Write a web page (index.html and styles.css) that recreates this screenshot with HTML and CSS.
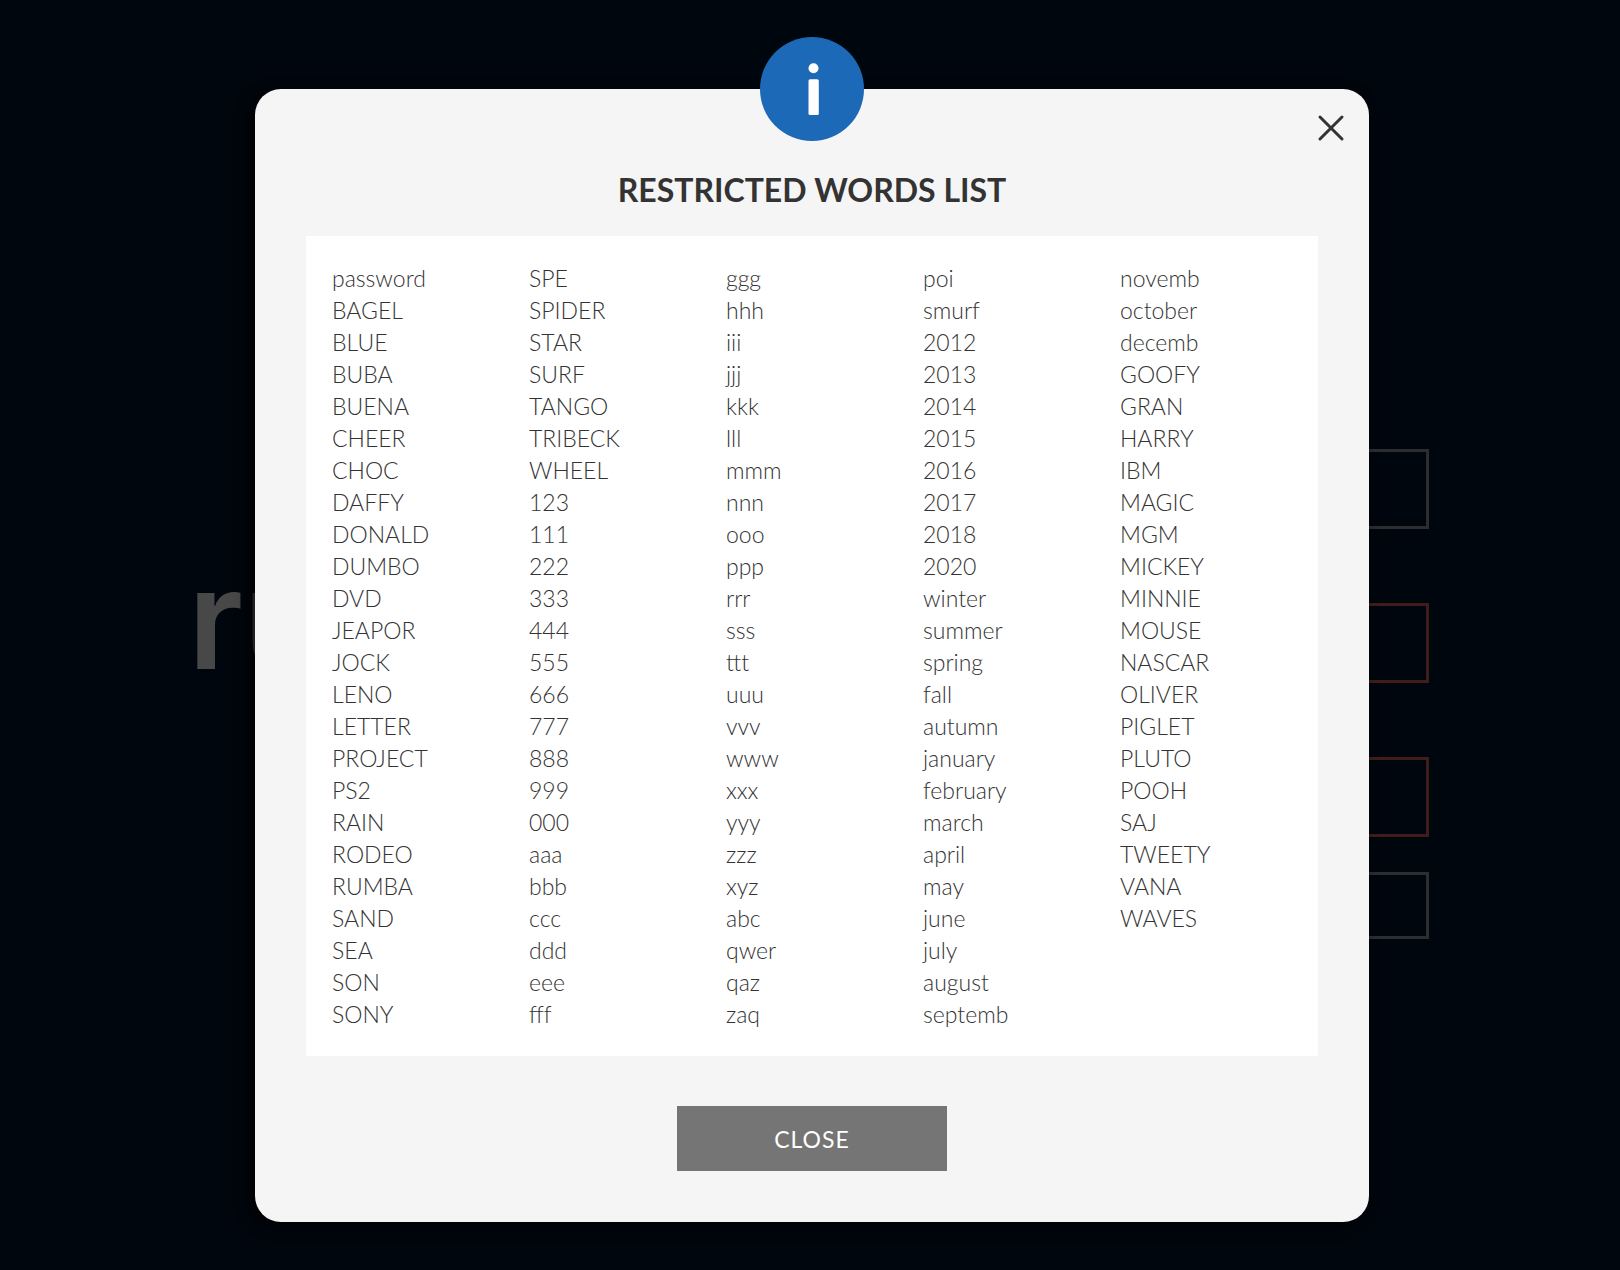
FILE: index.html
```
<!DOCTYPE html>
<html lang="en">
<head>
<meta charset="utf-8">
<title>Restricted words list</title>
<link rel="stylesheet" href="styles.css">
</head>
<body>

<!-- page behind the dialog -->
<div class="page">
    <div class="logo">ru</div>
    <form class="fields">
        <input type="text" aria-label="User name">
        <input type="password" class="error" aria-label="New password">
        <input type="password" class="error" aria-label="Confirm password">
        <button type="button" aria-label="Submit"></button>
    </form>
</div>

<div class="overlay">
<div class="modal" role="dialog" aria-modal="true" aria-labelledby="modal-title">
    <svg class="info" viewBox="0 0 104 104" aria-hidden="true">
        <circle cx="52" cy="52" r="52" fill="#1c69b7"/>
        <circle cx="53.5" cy="31.3" r="5" fill="#fff"/>
        <rect x="48.5" y="42.3" width="10.3" height="35.7" rx="1.5" fill="#fff"/>
    </svg>
    <button class="dismiss" aria-label="Close dialog">
        <svg viewBox="0 0 28 28"><path d="M3 3L25 25M25 3L3 25"/></svg>
    </button>

    <h1 id="modal-title">RESTRICTED WORDS LIST</h1>

    <div class="words">
        <ul>
            <li>password</li>
            <li>BAGEL</li>
            <li>BLUE</li>
            <li>BUBA</li>
            <li>BUENA</li>
            <li>CHEER</li>
            <li>CHOC</li>
            <li>DAFFY</li>
            <li>DONALD</li>
            <li>DUMBO</li>
            <li>DVD</li>
            <li>JEAPOR</li>
            <li>JOCK</li>
            <li>LENO</li>
            <li>LETTER</li>
            <li>PROJECT</li>
            <li>PS2</li>
            <li>RAIN</li>
            <li>RODEO</li>
            <li>RUMBA</li>
            <li>SAND</li>
            <li>SEA</li>
            <li>SON</li>
            <li>SONY</li>
        </ul>
        <ul>
            <li>SPE</li>
            <li>SPIDER</li>
            <li>STAR</li>
            <li>SURF</li>
            <li>TANGO</li>
            <li>TRIBECK</li>
            <li>WHEEL</li>
            <li>123</li>
            <li>111</li>
            <li>222</li>
            <li>333</li>
            <li>444</li>
            <li>555</li>
            <li>666</li>
            <li>777</li>
            <li>888</li>
            <li>999</li>
            <li>000</li>
            <li>aaa</li>
            <li>bbb</li>
            <li>ccc</li>
            <li>ddd</li>
            <li>eee</li>
            <li>fff</li>
        </ul>
        <ul>
            <li>ggg</li>
            <li>hhh</li>
            <li>iii</li>
            <li>jjj</li>
            <li>kkk</li>
            <li>lll</li>
            <li>mmm</li>
            <li>nnn</li>
            <li>ooo</li>
            <li>ppp</li>
            <li>rrr</li>
            <li>sss</li>
            <li>ttt</li>
            <li>uuu</li>
            <li>vvv</li>
            <li>www</li>
            <li>xxx</li>
            <li>yyy</li>
            <li>zzz</li>
            <li>xyz</li>
            <li>abc</li>
            <li>qwer</li>
            <li>qaz</li>
            <li>zaq</li>
        </ul>
        <ul>
            <li>poi</li>
            <li>smurf</li>
            <li>2012</li>
            <li>2013</li>
            <li>2014</li>
            <li>2015</li>
            <li>2016</li>
            <li>2017</li>
            <li>2018</li>
            <li>2020</li>
            <li>winter</li>
            <li>summer</li>
            <li>spring</li>
            <li>fall</li>
            <li>autumn</li>
            <li>january</li>
            <li>february</li>
            <li>march</li>
            <li>april</li>
            <li>may</li>
            <li>june</li>
            <li>july</li>
            <li>august</li>
            <li>septemb</li>
        </ul>
        <ul>
            <li>novemb</li>
            <li>october</li>
            <li>decemb</li>
            <li>GOOFY</li>
            <li>GRAN</li>
            <li>HARRY</li>
            <li>IBM</li>
            <li>MAGIC</li>
            <li>MGM</li>
            <li>MICKEY</li>
            <li>MINNIE</li>
            <li>MOUSE</li>
            <li>NASCAR</li>
            <li>OLIVER</li>
            <li>PIGLET</li>
            <li>PLUTO</li>
            <li>POOH</li>
            <li>SAJ</li>
            <li>TWEETY</li>
            <li>VANA</li>
            <li>WAVES</li>
        </ul>
    </div>

    <button class="close">CLOSE</button>
</div>
</div>

</body>
</html>
```
FILE: styles.css
```
* { box-sizing: border-box; }
body { margin: 0; background: #00060d; color: #333; font-family: Lato, sans-serif; }
button { border: 0; padding: 0; font-family: inherit; cursor: pointer; }

/* page behind the dialog */
.page { position: absolute; top: 0; left: 0; right: 0; display: grid; grid-template-columns: 1fr 1fr; max-width: 1260px; margin: 0 auto; padding: 449px 11px 0 8px; }
.logo { color: #484848; font-family: Inter, sans-serif; font-size: 139px; font-weight: 600; line-height: 340px; }
.fields { display: flex; flex-direction: column; gap: 74px; }
.fields input { width: 100%; height: 80px; border: 3px solid #2b2d30; background: transparent; }
.fields .error { border-color: #421c1b; }
.fields button { height: 67px; margin-top: -39px; border: 3px solid #2b2d30; background: transparent; }

.overlay { position: relative; padding: 89px 16px 48px 20px; }
.modal { position: relative; max-width: 1114px; margin: 0 auto; padding: 81px 51px 51px; border-radius: 26px; background: #f5f5f5; box-shadow: -6px 4px 14px rgba(0, 0, 0, .7); text-align: center; }

.info { position: absolute; top: -52px; left: 50%; width: 104px; height: 104px; margin-left: -52px; }
.dismiss { position: absolute; top: 25px; right: 24px; width: 28px; height: 28px; background: none; }
.dismiss svg { display: block; fill: none; stroke: #333; stroke-width: 3; stroke-linecap: round; }

h1 { margin: 0 0 26px; font-size: 32px; font-weight: 700; line-height: 40px; }

.words { display: grid; grid-template-columns: repeat(5, 1fr); column-gap: 25px; padding: 26px; background: #fff; text-align: left; }
.words ul { margin: 0; padding: 0; list-style: none; font-size: 23px; font-weight: 300; line-height: 32px; }

.close { width: 270px; height: 65px; margin-top: 50px; background: #757575; color: #fff; font-size: 23px; letter-spacing: 1px; vertical-align: top; }
```
